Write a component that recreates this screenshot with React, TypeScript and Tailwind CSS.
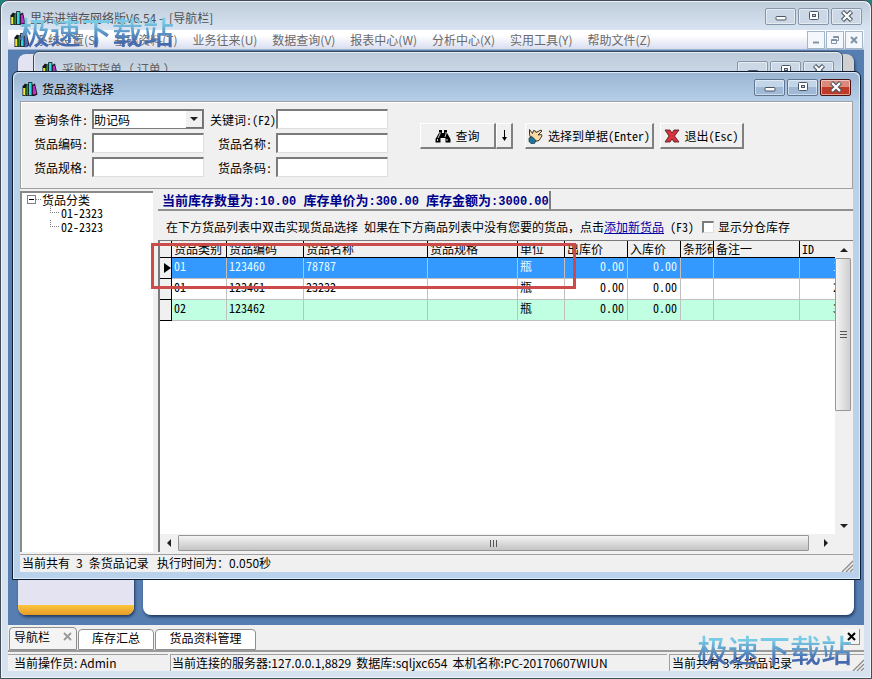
import { useState, type ReactNode } from "react";
import { clsx } from "clsx";

const SONG = "font-['Noto_Sans_Mono_CJK_SC','Noto_Sans_CJK_SC',monospace]";
const UI = "font-['Noto_Sans_CJK_SC',sans-serif]";

const menus = [
  "系统设置(S)",
  "基础资料(T)",
  "业务往来(U)",
  "数据查询(V)",
  "报表中心(W)",
  "分析中心(X)",
  "实用工具(Y)",
  "帮助文件(Z)",
];

const columns = [
  { name: "货品类别", width: "w-[55px]" },
  { name: "货品编码", width: "w-[77px]" },
  { name: "货品名称", width: "w-[124px]" },
  { name: "货品规格", width: "w-[90px]" },
  { name: "单位", width: "w-[47px]" },
  { name: "出库价", width: "w-[63px]" },
  { name: "入库价", width: "w-[53px]" },
  { name: "条形码", width: "w-[33px]" },
  { name: "备注一", width: "w-[86px]" },
  { name: "ID", width: "" },
];

const rows = [
  ["01", "123460", "78787", "", "瓶", "0.00", "0.00", "", "", "1"],
  ["01", "123461", "23232", "", "瓶", "0.00", "0.00", "", "", "2"],
  ["02", "123462", "", "", "瓶", "0.00", "0.00", "", "", "3"],
];

function BooksIcon() {
  return (
    <svg viewBox="0 0 16 16" className="h-4 w-4 shrink-0" aria-hidden="true">
      <path d="M.5 5.500l2.500-3 2 1v11l-4.500.5z" fill="#14161c" />
      <path d="M1.200 7h2.300v7H1.200z" fill="#f0ea28" />
      <path d="M4 4.500l1.500-1 1 1v10H4z" fill="#2f8a3c" stroke="#111" strokeWidth=".7" />
      <path d="M6.500 1.500h3.500v13H6.500z" fill="#2fd8e4" stroke="#111" strokeWidth=".8" />
      <path d="M10 4l3-1.500 2.500 11-3 1.500H10z" fill="#14161c" />
      <path d="M10.800 5l1.700-.7 2 8.500-2 .8h-1.700z" fill="#c02bcc" />
    </svg>
  );
}

function CaptionGlyph({ kind }: { kind: "min" | "max" | "close" }) {
  return (
    <svg viewBox="0 0 14 12" className="h-3 w-[14px]" aria-hidden="true">
      {kind === "min" && (
        <rect x="2" y="6.500" width="10" height="3.500" rx="1" fill="#fff" stroke="#4b5563" />
      )}
      {kind === "max" && (
        <>
          <rect x="2.500" y="1.500" width="9" height="8" rx="1" fill="#fff" stroke="#4b5563" />
          <rect x="5.500" y="4.500" width="3" height="2" fill="#c9d6e4" stroke="#4b5563" />
        </>
      )}
      {kind === "close" && (
        <>
          <path d="M2.500 1.500l9 9m0-9l-9 9" stroke="#4b5563" strokeWidth="4.400" />
          <path d="M3 2l8 8m0-8l-8 8" stroke="#fff" strokeWidth="2.300" />
        </>
      )}
    </svg>
  );
}

function CaptionButtons({ active = false }: { active?: boolean }) {
  const base =
    "flex h-[17px] w-[31px] items-center justify-center rounded-[2px] border shadow-[inset_0_0_0_1px_rgba(255,255,255,0.5)]";
  const plain = active
    ? "border-[#5f7690] bg-linear-to-b from-[#c3d5e9] from-50% to-[#9fb9d6] to-50%"
    : "border-[#8795a8] bg-[#ccd8e6]";
  return (
    <div className="flex gap-[2px]">
      <button aria-label="最小化" className={clsx(base, plain)}>
        <CaptionGlyph kind="min" />
      </button>
      <button aria-label="最大化" className={clsx(base, plain)}>
        <CaptionGlyph kind="max" />
      </button>
      <button
        aria-label="关闭"
        className={clsx(
          base,
          active
            ? "border-[#4a1512] bg-linear-to-b from-[#dc8a7c] from-50% to-[#c03a28] to-50%"
            : plain,
        )}
      >
        <CaptionGlyph kind="close" />
      </button>
    </div>
  );
}

function MdiButton({ label, children }: { label: string; children: ReactNode }) {
  return (
    <button
      aria-label={label}
      className="flex h-[18px] w-[18px] items-center justify-center border border-[#a3b5c9] bg-[#f4f7fb]"
    >
      <svg viewBox="0 0 10 10" className="h-[10px] w-[10px]" fill="none" stroke="#7f93a5" aria-hidden="true">
        {children}
      </svg>
    </button>
  );
}

function Watermark({ className }: { className: string }) {
  return (
    <div
      className={clsx(
        "pointer-events-none absolute z-20 bg-linear-to-b from-[#78cbe4] from-25% to-[#466aae] to-80% bg-clip-text text-[31px] leading-9 font-medium whitespace-nowrap text-transparent",
        className,
      )}
    >
      极速下载站
    </div>
  );
}

type FieldProps = { id: string; label: string; width: string; tight?: boolean; children?: ReactNode };

function Field({ id, label, width, tight = false, children }: FieldProps) {
  return (
    <div className="flex h-5 items-center">
      <label htmlFor={id} className={clsx("pt-0.5 text-right", width, !tight && "pr-1")}>
        {label}
      </label>
      {children ?? (
        <input
          id={id}
          className="h-5 w-28 border-t-2 border-r border-b border-l-2 border-t-[#7b7b7b] border-r-[#dedede] border-b-[#dedede] border-l-[#7b7b7b] bg-white px-0.5 outline-none"
        />
      )}
    </div>
  );
}

const raised =
  "flex h-[26px] items-center justify-center border-t border-r-2 border-b-2 border-l border-t-white border-r-[#808080] border-b-[#808080] border-l-white bg-[#f0f0f0] whitespace-nowrap";

function Arrow({ d }: { d: string }) {
  return (
    <svg viewBox="0 0 8 8" className="h-2 w-2" aria-hidden="true">
      <path d={d} fill="#202020" />
    </svg>
  );
}

function SizeGrip() {
  return (
    <svg viewBox="0 0 12 12" className="h-3 w-3 shrink-0 self-end" stroke="#8a8a8a" strokeWidth="1.300" aria-hidden="true">
      <path d="M1 12L12 1M5 12l7-7M9 12l3-3" />
    </svg>
  );
}

function SearchPanel() {
  return (
    <div className="flex h-[88px] items-start border border-[#a0a0a0] pt-[7px] shadow-[inset_1px_1px_0_#fff]">
      <div className="flex flex-col gap-1">
        <Field id="cond" label="查询条件:" width="w-[71px]">
          <div className="relative h-5 w-28">
            <select
              id="cond"
              className="h-5 w-full appearance-none border-t-2 border-r border-b border-l-2 border-[#7b7b7b] bg-white text-xs leading-4 outline-none"
            >
              <option>助记码</option>
            </select>
            <span className="pointer-events-none absolute top-0.5 right-px flex h-[17px] w-[17px] items-center justify-center border-r border-b border-[#707070] bg-[#f0f0f0]">
              <Arrow d="M0 2h8L4 6z" />
            </span>
          </div>
        </Field>
        <Field id="code" label="货品编码:" width="w-[71px]" />
        <Field id="spec" label="货品规格:" width="w-[71px]" />
      </div>
      <div className="flex flex-col gap-1">
        <Field id="key" label="关键词:(F2)" width="w-[72px]" tight />
        <Field id="name" label="货品名称:" width="w-[72px]" />
        <Field id="bar" label="货品条码:" width="w-[72px]" />
      </div>
      <div className="ml-8 flex pt-[14px]">
        <button className={clsx(raised, "w-[76px] gap-1")}>
          <svg viewBox="0 0 16 14" className="h-[14px] w-4" aria-hidden="true">
            <path d="M4 1h3v3h2V1h3v3l3.500 6v3.500h-5V9h-5v4.500h-5V10L4 4z" fill="#000" />
            <path d="M5 3v2L3 9M11 3v2l-1 3M2.500 10v2M12 10v2" stroke="#fff" strokeWidth=".8" fill="none" />
          </svg>
          查询
        </button>
        <button aria-label="查询选项" className={clsx(raised, "w-[17px]")}>
          <svg viewBox="0 0 7 12" className="h-3 w-[7px]" aria-hidden="true">
            <path d="M3.500 0v9" stroke="#000" />
            <path d="M1 7h5L3.500 11z" fill="#000" />
          </svg>
        </button>
        <button className={clsx(raised, "ml-3 w-[129px] gap-1")}>
          <svg viewBox="0 0 16 16" className="h-4 w-4 shrink-0" aria-hidden="true">
            <path
              d="M1.500 1.500l3 4 1-3 2 .5.500 1.500L13 2l1 1-4 4 3.500-.5.500 1.500-3 4.500-4 1-4-3-1.500-4z"
              fill="#fbd9a4"
              stroke="#2a2118"
              strokeWidth=".9"
            />
            <path d="M1 10l3-1.500 4 4-1.500 3-3 .5L1 13.500z" fill="#1b7595" stroke="#123" strokeWidth=".6" />
          </svg>
          选择到单据(Enter)
        </button>
        <button className={clsx(raised, "ml-1.5 w-[84px] gap-1")}>
          <svg viewBox="0 0 16 14" className="h-[14px] w-4 shrink-0" aria-hidden="true">
            <path
              d="M1 1h5l2 3 2-3h5l-4.500 6L15 13h-5l-2-3-2 3H1l4-6z"
              fill="#d8323c"
              stroke="#4c1216"
              strokeWidth=".8"
            />
          </svg>
          退出(Esc)
        </button>
      </div>
    </div>
  );
}

function CategoryTree() {
  return (
    <ul className="w-[133px] shrink-0 border-t-2 border-l-2 border-[#8a8a8a] bg-white leading-[14px]">
      <li>
        <div className="flex h-[13px] items-center">
          <svg viewBox="0 0 16 12" className="ml-1 h-3 w-4" fill="none" aria-hidden="true">
            <rect x="1.500" y="1.500" width="8" height="8" stroke="#808080" />
            <path d="M3 5.500h5" stroke="#000" />
            <path d="M10 5.500h5" stroke="#808080" strokeDasharray="1 1" />
          </svg>
          货品分类
        </div>
        <ul className="ml-7">
          {["01-2323", "02-2323"].map((item) => (
            <li key={item} className="flex">
              <span className="mr-0.5 h-[7px] w-[9px] border-b border-l border-dotted border-[#808080]" />
              {item}
            </li>
          ))}
        </ul>
      </li>
    </ul>
  );
}

function GoodsTable() {
  const [selected, setSelected] = useState(0);
  return (
    <table className="w-[calc(100%+8px)] table-fixed border-separate border-spacing-0 leading-4">
      <thead>
        <tr className="h-[17px] bg-[#f0f0f0]">
          <th className="w-3 border-r border-b border-black p-0" />
          {columns.map((c) => (
            <th
              key={c.name}
              className={clsx(
                "overflow-hidden border-r border-b border-black p-0 pl-0.5 text-left font-normal whitespace-nowrap",
                c.width,
              )}
            >
              {c.name}
            </th>
          ))}
        </tr>
      </thead>
      <tbody>
        {rows.map((row, r) => (
          <tr
            key={row[1]}
            onClick={() => setSelected(r)}
            className={clsx(
              "h-[21px]",
              r === selected ? "bg-[#3399ff] text-[#e6fbff]" : r % 2 === 0 ? "bg-[#c0ffe2]" : "bg-white",
            )}
          >
            <td className="border-r border-b border-black bg-[#f0f0f0] p-0 pl-1 text-black">
              {r === selected && (
                <svg viewBox="0 0 7 10" className="h-[10px] w-[7px]" aria-hidden="true">
                  <path d="M0 0l7 5-7 5z" />
                </svg>
              )}
            </td>
            {row.map((cell, i) => (
              <td
                key={i}
                className={clsx(
                  "overflow-hidden border-r border-b border-[#c0c0c0] p-0 pb-1 whitespace-nowrap",
                  i === 5 || i === 6 || i === 9 ? "pr-[3px] text-right" : "pl-0.5",
                )}
              >
                {cell}
              </td>
            ))}
          </tr>
        ))}
      </tbody>
    </table>
  );
}

function GoodsGrid() {
  return (
    <div className="grid min-h-0 flex-1 grid-cols-[minmax(0,1fr)_18px] grid-rows-[minmax(0,1fr)_18px] border-t border-l-2 border-[#7a7a7a] bg-white">
      <div className="overflow-hidden">
        <GoodsTable />
      </div>
      <div className="flex flex-col items-center bg-[#f0f0f0]">
        <span className="flex h-[17px] items-center">
          <Arrow d="M0 6h8L4 2z" />
        </span>
        <div className="w-full flex-1 pr-0.5">
          <div className="flex h-[59%] flex-col items-center justify-center gap-0.5 rounded-[1px] border border-[#979797] bg-linear-to-r from-[#f4f4f4] to-[#cfcfcf]">
            <i className="h-px w-[7px] bg-[#555]" />
            <i className="h-px w-[7px] bg-[#555]" />
            <i className="h-px w-[7px] bg-[#555]" />
          </div>
        </div>
        <span className="flex h-[17px] items-center">
          <Arrow d="M0 2h8L4 6z" />
        </span>
      </div>
      <div className="flex items-center bg-[#f0f0f0]">
        <span className="flex w-[18px] justify-center">
          <Arrow d="M6 0v8L2 4z" />
        </span>
        <div className="mr-2 flex h-4 flex-1 items-center justify-center gap-0.5 rounded-[1px] border border-[#979797] bg-linear-to-b from-[#f4f4f4] to-[#c4c4c4]">
          <i className="h-[7px] w-px bg-[#555]" />
          <i className="h-[7px] w-px bg-[#555]" />
          <i className="h-[7px] w-px bg-[#555]" />
        </div>
        <span className="flex w-[18px] justify-center">
          <Arrow d="M2 0v8l4-4z" />
        </span>
      </div>
      <div className="bg-[#f0f0f0]" />
    </div>
  );
}

function StockFigure({ label, value }: { label: string; value: string }) {
  return (
    <>
      {label}
      <span className="font-['Liberation_Mono',monospace] text-xs">:{value} </span>
    </>
  );
}

function GoodsDialog() {
  return (
    <section className="absolute top-[71px] right-[11px] bottom-[99px] left-3 z-10 flex flex-col rounded-t-md border border-[#0e1c30] bg-[#b9d1ea] px-[7px] pb-[7px] shadow-[inset_0_0_0_1px_#dcebfa]">
      <header className="-mx-1.5 mt-px flex h-7 items-center justify-between rounded-t-md bg-linear-to-b from-[#9bb5d2] to-[#b6cee8] pr-2 pl-2">
        <h2 className={clsx("flex items-center gap-1 pt-1", UI)}>
          <BooksIcon />
          货品资料选择
        </h2>
        <CaptionButtons active />
      </header>
      <div className={clsx("flex min-h-0 flex-1 flex-col bg-[#f0f0f0]", SONG)}>
        <SearchPanel />
        <div className="flex min-h-0 flex-1 gap-[5px] pt-0.5 pb-0.5">
          <CategoryTree />
          <div className="flex min-w-0 flex-1 flex-col">
            <div className="flex h-5 border-b-2 border-[#909090]">
              <p className="border-r-2 border-[#808080] pl-1 text-[13px] leading-[18px] font-bold whitespace-nowrap text-[#00008b]">
                <StockFigure label="当前库存数量为" value="10.00" />
                <StockFigure label="库存单价为" value="300.00" />
                <StockFigure label="库存金额为" value="3000.00" />
              </p>
            </div>
            <div className="flex h-[29px] items-center pt-0.5 pl-2 whitespace-nowrap">
              <p>
                在下方货品列表中双击实现货品选择&ensp;如果在下方商品列表中没有您要的货品，点击
                <a href="#new" className="text-[#0000a8] underline">
                  添加新货品
                </a>
                &ensp;(F3)
              </p>
              <label className="ml-2 flex items-center gap-1">
                <input
                  type="checkbox"
                  className="h-3 w-3 appearance-none border-t-2 border-r border-b border-l-2 border-t-[#7b7b7b] border-r-[#dedede] border-b-[#dedede] border-l-[#7b7b7b] bg-white"
                />
                显示分仓库存
              </label>
            </div>
            <GoodsGrid />
          </div>
        </div>
        <footer
          className={clsx(
            "flex h-[18px] justify-between border-t border-[#a0a0a0] pl-0.5 leading-4",
            UI,
          )}
        >
          <span>
            当前共有&ensp;3&ensp;条货品记录&ensp;&thinsp;执行时间为：0.050秒
          </span>
          <SizeGrip />
        </footer>
      </div>
      <div className="pointer-events-none absolute top-[171px] left-[138px] h-[46px] w-[425px] border-[3px] border-[#cb4b4b]" />
    </section>
  );
}

export default function App() {
  return (
    <div className={clsx("h-screen bg-[#1c857c] text-xs text-black", UI)}>
      <main className="relative flex h-full flex-col overflow-hidden rounded-t-lg border border-[#434b57] bg-[#d6e2ef] px-[7px] pb-[7px] shadow-[inset_0_0_0_1px_#eef4fa]">
        <header className="-mx-1.5 mt-px flex h-7 items-center justify-between rounded-t-lg bg-linear-to-b from-[#bfccd9] to-[#d8e4f2] pr-2 pl-2">
          <h1 className="flex items-center gap-1 pt-1 text-[#505050]">
            <BooksIcon />
            里诺进销存网络版V6.54 -&ensp;[导航栏]
          </h1>
          <CaptionButtons />
        </header>
        <nav className="flex h-5 shrink-0 items-center justify-between border-b border-[#9fb4cf] bg-linear-to-b from-white from-30% to-[#d9ddf0] pr-px pl-1.5 text-[#6a6a6a]">
          <div className="flex items-center">
            <BooksIcon />
            <ul className="ml-1.5 flex gap-[15px] whitespace-nowrap">
              {menus.map((m) => (
                <li key={m}>
                  <button>{m}</button>
                </li>
              ))}
            </ul>
          </div>
          <div className="flex gap-px">
            <MdiButton label="最小化子窗口">
              <path d="M2 7.500h6" strokeWidth="2" />
            </MdiButton>
            <MdiButton label="还原子窗口">
              <path d="M3.500 3V1.500h5v4H7M1.500 4.500h5v4h-5zM1.500 5.500h5M3.500 2.500h5" />
            </MdiButton>
            <MdiButton label="关闭子窗口">
              <path d="M2 2l6 6m0-6l-6 6" strokeWidth="2" />
            </MdiButton>
          </div>
        </nav>
        <div className="relative flex min-h-0 flex-1 gap-[9px] bg-[#577eb0] px-2.5 pt-1 pb-2.5">
          <div className="flex w-[116px] flex-col justify-end overflow-hidden rounded-lg bg-[#e3e3f2] shadow-[1px_2px_3px_#1f3a60]">
            <div className="h-2.5 bg-linear-to-b from-[#fdc63e] to-[#e59a26]" />
          </div>
          <div className="flex-1 rounded-lg bg-linear-to-b from-[#d0d0d0] from-30% to-white to-30% shadow-[1px_2px_3px_#1f3a60]" />
          <section className="absolute top-px right-[21px] left-[25px] h-24 rounded-t-md border border-[#3b4a5c] bg-linear-to-b from-[#bccad9] to-[#d0dcea] to-30% shadow-[inset_0_0_0_1px_#e4edf6]">
            <header className="flex items-start justify-between pt-[9px] pr-2 pl-2">
              <h2 className="flex items-center gap-1 text-[#606060]">
                <BooksIcon />
                采购订货单（ 订单 ）
              </h2>
              <CaptionButtons />
            </header>
          </section>
        </div>
        <div className="flex h-[27px] shrink-0 items-start justify-between border-b-2 border-[#9a9a9a] bg-[#f0f0f0] pt-0.5 pr-1">
          <div className={clsx("flex items-end gap-px pl-px leading-4", SONG)}>
            <div className="flex h-[23px] w-[68px] items-center justify-between rounded-t-sm border border-[#8e8e8e] bg-[#f4f4f4] px-1 pb-1">
              <button>导航栏</button>
              <button aria-label="关闭标签">
                <svg viewBox="0 0 9 9" className="h-[9px] w-[9px]" aria-hidden="true">
                  <path d="M1 1l7 7m0-7L1 8" stroke="#9a9a9a" strokeWidth="1.800" />
                </svg>
              </button>
            </div>
            <button className="h-[21px] w-[76px] rounded-t-sm border border-[#8e8e8e] bg-white pb-1">库存汇总</button>
            <button className="h-[21px] w-[101px] rounded-t-sm border border-[#8e8e8e] bg-white pb-1">
              货品资料管理
            </button>
          </div>
          <button
            aria-label="关闭"
            className="mt-0.5 flex h-4 w-4 items-center justify-center border-r border-b border-[#8e8e8e] bg-[#f4f4f4]"
          >
            <svg viewBox="0 0 9 9" className="h-[9px] w-[9px]" aria-hidden="true">
              <path d="M1 1l7 7m0-7L1 8" stroke="#000" strokeWidth="2" />
            </svg>
          </button>
        </div>
        <footer className="flex h-[19px] shrink-0 gap-0.5 bg-[#f0f0f0] pt-0.5 leading-4 whitespace-nowrap">
          <span className="w-40 border-t border-[#a0a0a0] pl-1.5">当前操作员: Admin</span>
          <span className="flex-1 border-t border-l border-[#a0a0a0] pl-px">
            当前连接的服务器:127.0.0.1,8829&thinsp; 数据库:sqljxc654&thinsp; 本机名称:PC-20170607WIUN
          </span>
          <span className="flex w-[195px] justify-between border-t border-l border-[#a0a0a0] pl-0.5">
            当前共有 3 条货品记录
            <SizeGrip />
          </span>
        </footer>
        <Watermark className="top-3 left-[18px]" />
        <Watermark className="right-[19px] bottom-[11px]" />
      </main>
      <GoodsDialog />
    </div>
  );
}
